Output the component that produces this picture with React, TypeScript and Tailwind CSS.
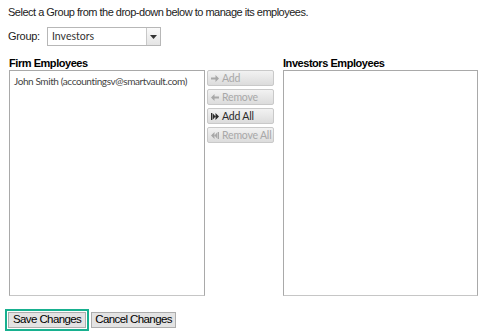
import { FC, ReactNode } from "react";

const ArrowRight = () => (
	<svg width="8" height="7" viewBox="0 0 8 7" className="shrink-0">
		<path d="M0 2.5h4.5V0L8 3.5 4.5 7V4.5H0z" fill="currentColor" />
	</svg>
);

const ArrowLeft = () => (
	<svg width="8" height="7" viewBox="0 0 8 7" className="shrink-0">
		<path d="M8 2.5H3.5V0L0 3.5 3.5 7V4.5H8z" fill="currentColor" />
	</svg>
);

const DoubleRight = () => (
	<svg width="8" height="7" viewBox="0 0 8 7" className="shrink-0">
		<path d="M0 0h1v7H0z M1.5 0L4.5 3.5 1.5 7z M4.5 0L8 3.5 4.5 7z" fill="currentColor" />
	</svg>
);

const DoubleLeft = () => (
	<svg width="8" height="7" viewBox="0 0 8 7" className="shrink-0">
		<path d="M3.5 0L0 3.5 3.5 7z M6.5 0L3.5 3.5 6.5 7z M7 0h1v7H7z" fill="currentColor" />
	</svg>
);

interface MoveButtonProps {
	icon: ReactNode;
	label: string;
	enabled?: boolean;
}

const MoveButton: FC<MoveButtonProps> = ({ icon, label, enabled }) => (
	<button
		className={`flex items-center gap-[3px] h-[16px] w-[67px] pl-[3px] border border-[#c9c9c9] rounded-[2px] bg-gradient-to-b from-[#f2f2f2] to-[#dcdcdc] text-[10.5px] tracking-[-0.2px] leading-none whitespace-nowrap font-['Lato',sans-serif] ${
			enabled ? "text-[#2a2a2a]" : "text-[#a8a8a8]"
		}`}
	>
		{icon}
		<span>{label}</span>
	</button>
);

const App: FC = () => {
	return (
		<div className="w-[484px] h-[333px] bg-white text-[#111] font-['Liberation_Sans',Arial,sans-serif] overflow-hidden">
			<p className="pl-[8px] pt-[5px] text-[11px] tracking-[-0.5px] leading-[14px] text-[#222]">
				Select a Group from the drop-down below to manage its employees.
			</p>

			<div className="flex items-center mt-[8px] pl-[8px] h-[19px]">
				<span className="text-[11px] tracking-[-0.3px] text-[#222] w-[39px]">Group:</span>
				<div className="flex w-[114px] h-[19px] border border-[#b7b7b7] bg-white">
					<span className="flex-1 pl-[4px] text-[10.5px] leading-[17px] text-[#333] font-['Lato',sans-serif]">
						Investors
					</span>
					<div className="w-[14px] border-l border-[#c8c8c8] bg-gradient-to-b from-[#fafafa] to-[#e4e4e4] flex items-center justify-center">
						<svg width="7" height="4" viewBox="0 0 7 4">
							<path d="M0 0h7L3.5 4z" fill="#333" />
						</svg>
					</div>
				</div>
			</div>

			<div className="flex mt-[11px] pl-[9px]">
				<div className="flex flex-col w-[196px]">
					<p className="text-[11px] font-bold tracking-[-0.45px] leading-[13px] text-black">Firm Employees</p>
					<div className="h-[226px] border border-[#a9a9a9] border-b-[#c6c6c6] bg-white px-[4px] pt-[3px]">
						<p className="text-[10px] tracking-[-0.4px] leading-[14px] text-[#444] whitespace-nowrap font-['Lato',sans-serif]">
							John Smith (accountingsv@smartvault.com)
						</p>
					</div>
				</div>

				<div className="flex flex-col gap-[3px] ml-[2px] mt-[13px] w-[67px]">
					<MoveButton icon={<ArrowRight />} label="Add" />
					<MoveButton icon={<ArrowLeft />} label="Remove" />
					<MoveButton icon={<DoubleRight />} label="Add All" enabled />
					<MoveButton icon={<DoubleLeft />} label="Remove All" />
				</div>

				<div className="flex flex-col w-[195px] ml-[9px]">
					<p className="text-[11px] font-bold tracking-[-0.45px] leading-[13px] text-black">Investors Employees</p>
					<div className="h-[226px] border border-[#a9a9a9] border-b-[#c6c6c6] bg-white" />
				</div>
			</div>

			<div className="flex items-center mt-[13px] pl-[5px] gap-[2px]">
				<div className="flex border-2 border-[#17b08f] p-[1px]">
					<button className="h-[16px] px-[4px] border border-[#adadad] bg-[#e3e3e3] text-[11.5px] tracking-[-0.6px] leading-none text-black">
						Save Changes
					</button>
				</div>
				<button className="h-[16px] px-[3px] border border-[#adadad] bg-[#e3e3e3] text-[11.5px] tracking-[-0.6px] leading-none text-black">
					Cancel Changes
				</button>
			</div>
		</div>
	);
};

export default App;
